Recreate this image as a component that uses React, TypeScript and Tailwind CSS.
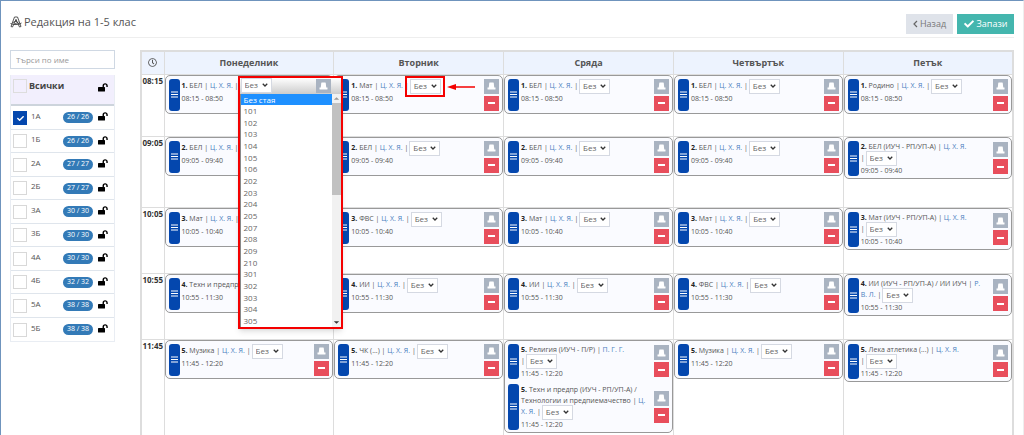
import { FaCheck, FaRegClock } from "react-icons/fa";

type Lesson = {
  no: number;
  title: string;
  // second line of a long title
  extraLine?: string;
  teacher: string;
  // part of the teacher name that goes to the next line
  teacherRest?: string;
  time: string;
  wrap?: boolean;
};

const classes = [
  { name: "1А", hours: "26 / 26", checked: true },
  { name: "1Б", hours: "26 / 26" },
  { name: "2А", hours: "27 / 27" },
  { name: "2Б", hours: "27 / 27" },
  { name: "3А", hours: "30 / 30" },
  { name: "3Б", hours: "30 / 30" },
  { name: "4А", hours: "30 / 30" },
  { name: "4Б", hours: "32 / 32" },
  { name: "5А", hours: "38 / 38" },
  { name: "5Б", hours: "38 / 38" },
];

const days = ["Понеделник", "Вторник", "Сряда", "Четвъртък", "Петък"];

const rooms = [
  "Без стая", "101", "102", "103", "104", "105", "106", "202", "203", "204",
  "205", "207", "208", "209", "210", "301", "302", "303", "304", "305",
];

const simple = (no: number, title: string, time: string): Lesson => ({
  no,
  title,
  teacher: "Ц. Х. Я.",
  time,
});

const rows: { start: string; height: string; cells: Lesson[][] }[] = [
  {
    start: "08:15",
    height: "h-[62px]",
    cells: ["БЕЛ", "Мат", "БЕЛ", "БЕЛ", "Родино"].map((t) => [simple(1, t, "08:15 - 08:50")]),
  },
  {
    start: "09:05",
    height: "h-[71px]",
    cells: [
      ...["БЕЛ", "БЕЛ", "БЕЛ", "БЕЛ"].map((t) => [simple(2, t, "09:05 - 09:40")]),
      [{ ...simple(2, "БЕЛ (ИУЧ - РП/УП-А)", "09:05 - 09:40"), wrap: true }],
    ],
  },
  {
    start: "10:05",
    height: "h-[66px]",
    cells: [
      ...["Мат", "ФВС", "Мат", "Мат"].map((t) => [simple(3, t, "10:05 - 10:40")]),
      [{ ...simple(3, "Мат (ИУЧ - РП/УП-А)", "10:05 - 10:40"), wrap: true }],
    ],
  },
  {
    start: "10:55",
    height: "h-[66px]",
    cells: [
      ...["Техн и предпр", "ИИ", "ИИ", "ФВС"].map((t) => [simple(4, t, "10:55 - 11:30")]),
      [{ no: 4, title: "ИИ (ИУЧ - РП/УП-А) / ИИ ИУЧ", teacher: "Р.", teacherRest: "В. Л.", time: "10:55 - 11:30" }],
    ],
  },
  {
    start: "11:45",
    height: "h-[120px]",
    cells: [
      [simple(5, "Музика", "11:45 - 12:20")],
      [simple(5, "ЧК (...)", "11:45 - 12:20")],
      [
        { no: 5, title: "Религия (ИУЧ - П/Р)", teacher: "П. Г. Г.", time: "11:45 - 12:20", wrap: true },
        {
          no: 5,
          title: "Техн и предпр (ИУЧ - РП/УП-А) /",
          extraLine: "Технологии и предпиемачество",
          teacher: "Ц.",
          teacherRest: "Х. Я.",
          time: "11:45 - 12:20",
        },
      ],
      [simple(5, "Музика", "11:45 - 12:20")],
      [{ ...simple(5, "Лека атлетика (...)", "11:45 - 12:20"), wrap: true }],
    ],
  },
];

const UnlockIcon = () => (
  <svg viewBox="0 0 20 18" className="h-[9px] w-[10px] shrink-0" aria-hidden="true">
    <path d="M1 8h12q1 0 1 1v7q0 1-1 1H1q-1 0-1-1V9q0-1 1-1z" fill="#000" />
    <path d="M10.500 9V5.500a3.800 3.800 0 0 1 7.600 0V8" fill="none" stroke="#000" strokeWidth="2.800" />
  </svg>
);

const HatIcon = () => (
  <svg viewBox="0 0 18 16" className="h-2 w-[9px]" aria-hidden="true">
    <path d="M4.500 2q0-1 1-1h7q1 0 1 1l1 9h-11zM1 11h16v3q0 1-1 1H2q-1 0-1-1z" fill="#fff" />
  </svg>
);

const CompassIcon = () => (
  <svg viewBox="0 0 24 24" className="size-3" fill="none" stroke="#444" strokeWidth="1.800" aria-hidden="true">
    <path d="M9 2h6l7 19-3 1L12 7 5 22l-3-1zM12 7v4M1 15c6 3 16 3 22-1M6 13l6-3 7 7M8 17l9-5" />
  </svg>
);

const RoomSelect = ({ label }: { label: string }) => (
  <span className="relative -my-px ml-px inline-flex h-[15px] w-[31px] align-middle">
    <select
      aria-label={label}
      className="size-full appearance-none rounded-none border border-[#d5d9e2] bg-white pr-3 pl-[3px] text-[8px] leading-3 text-[#666]"
    >
      {rooms.map((room) => (
        <option key={room}>{room}</option>
      ))}
    </select>
    <svg viewBox="0 0 12 8" className="pointer-events-none absolute top-[5px] right-1 h-1 w-[6px]" aria-hidden="true">
      <path d="M1.500 1.500 6 6l4.500-4.500" fill="none" stroke="#333" strokeWidth="2.600" />
    </svg>
  </span>
);

const RoomList = () => (
  <div className="absolute top-0 left-[72px] z-20 w-[105px] border-2 border-[#f40000] bg-white shadow-md">
    <div className="flex h-4 items-start justify-between bg-linear-to-b from-white to-[#ccc] py-px">
      <RoomSelect label="Стая" />
      <span className="mr-[10px] flex h-[14px] w-[15px] items-center justify-center bg-[#a9b3c1]">
        <HatIcon />
      </span>
    </div>
    <div className="flex border-l border-[#888]">
      <ul
        role="listbox"
        aria-label="Стаи"
        className="grid h-[233px] flex-1 auto-rows-fr text-[8px] leading-[11px] text-[#666]"
      >
        {rooms.map((room, i) => (
          <li
            key={room}
            role="option"
            aria-selected={i === 0}
            className={i === 0 ? "bg-[#1e90ff] pl-[3px] text-white" : "pl-[3px]"}
          >
            {room}
          </li>
        ))}
      </ul>
      <div className="flex w-[9px] flex-col items-center bg-[#f1f1f1]">
        <svg viewBox="0 0 10 10" className="size-[9px]" aria-hidden="true">
          <path d="M2 6.500 5 3.500l3 3z" fill="#999" />
        </svg>
        <div className="h-[92px] w-full bg-[#c1c1c1]" />
        <svg viewBox="0 0 10 10" className="mt-auto size-[9px]" aria-hidden="true">
          <path d="M2 3.500h6l-3 3z" fill="#333" />
        </svg>
      </div>
    </div>
  </div>
);

const LessonCard = ({ lesson, marked }: { lesson: Lesson; marked?: boolean }) => {
  const multiline = lesson.wrap || lesson.teacherRest;
  const select = <RoomSelect label={`Стая за ${lesson.title}`} />;
  return (
    <div className="flex gap-[2px] px-[3px] pt-[3px] pb-[2px]">
      <button
        aria-label="Премести"
        className="flex w-[11px] shrink-0 items-center justify-center rounded-[3px] bg-[#0447ae]"
      >
        <svg viewBox="0 0 7 7" className="size-[7px]" aria-hidden="true">
          <path d="M0 1h7M0 3.500h7M0 6h7" stroke="#fff" />
        </svg>
      </button>
      <div
        className={`min-w-0 flex-1 text-[7px] leading-[11px] whitespace-nowrap ${multiline ? "" : "pt-px"}`}
      >
        <div>
          <b className="text-[#222]">{lesson.no}.</b> {lesson.title}
          {lesson.extraLine && (
            <>
              <br />
              {lesson.extraLine}
            </>
          )}{" "}
          |{" "}
          <a href="#" className="text-[#4a7fc0]">
            {lesson.teacher}
            {lesson.teacherRest && (
              <>
                <br />
                {lesson.teacherRest}
              </>
            )}
          </a>
          {lesson.wrap ? <br /> : " "}
          {marked ? (
            <span className="relative inline-block">
              |{select}
              <span className="pointer-events-none absolute -inset-y-1 -right-1 left-0 border-2 border-[#f40000]" />
              <svg viewBox="0 0 28 8" className="absolute top-[3px] left-full ml-[6px] h-2 w-7" aria-hidden="true">
                <path d="M6 4h22" stroke="#f40000" strokeWidth="1.500" />
                <path d="M0 4 9 1v6z" fill="#f40000" />
              </svg>
            </span>
          ) : (
            <>|{select}</>
          )}
        </div>
        <div>{lesson.time}</div>
      </div>
      <div className="flex shrink-0 flex-col justify-center gap-[2px]">
        <button aria-label="Замести" className="flex size-[15px] items-center justify-center bg-[#a9b3c1]">
          <HatIcon />
        </button>
        <button aria-label="Премахни" className="flex size-[15px] items-center justify-center bg-[#e84e5c]">
          <span className="h-[2px] w-[7px] bg-white" />
        </button>
      </div>
    </div>
  );
};

const Sidebar = () => (
  <aside className="w-[105px] shrink-0">
    <input
      type="text"
      aria-label="Търси по име"
      placeholder="Търси по име"
      className="block h-[19px] w-full border border-[#cfd8e3] px-[5px] text-[8px] placeholder:text-[#999]"
    />
    <div className="mt-[6px] border-x border-b border-[#e9edf3]">
      <div className="flex h-[31px] items-start border-b-2 border-[#cdd4dc] bg-[#f2effd] px-[2px] pt-1">
        <input type="checkbox" id="all" className="size-[14px] appearance-none border border-[#ddd]" />
        <label htmlFor="all" className="ml-[2px] text-[9px] leading-[14px] font-bold text-[#444]">
          Всички
        </label>
        <span className="mt-1 mr-1 ml-auto">
          <UnlockIcon />
        </span>
      </div>
      {classes.map((c, i) => (
        <div
          key={c.name}
          className="flex h-[23px] items-center border-b border-[#dfe5ec] px-[2px] last:border-b-0 even:h-6"
        >
          <span className="relative flex">
            <input
              type="checkbox"
              id={`class-${i}`}
              defaultChecked={c.checked}
              className="size-[14px] appearance-none border border-[#d8d8d8] bg-white checked:border-[#0447ae] checked:bg-[#0447ae]"
            />
            {c.checked && <FaCheck className="pointer-events-none absolute top-1 left-1 size-[7px] text-white" />}
          </span>
          <label htmlFor={`class-${i}`} className="mb-1 ml-1 flex-1 text-[8px] leading-3">
            {c.name}
          </label>
          <span className="mr-[5px] flex h-[11px] w-[30px] items-center justify-center rounded-full bg-[#337ab7] text-[7px] text-white">
            {c.hours}
          </span>
          <span className="mr-1 mb-[2px]">
            <UnlockIcon />
          </span>
        </div>
      ))}
    </div>
  </aside>
);

const App = () => {
  return (
    <div className="relative h-screen overflow-hidden border-t border-r border-l border-t-[#6f94bd] border-r-[#eee] border-l-[#6f94bd] bg-white px-[9px] font-['Open_Sans','Noto_Sans',sans-serif] text-[#555]">
      <header className="flex h-[37px] items-end justify-between border-b border-[#eee] pb-[3px]">
        <h1 className="mb-1 flex items-center gap-[2px] text-[11px] leading-4">
          <CompassIcon />
          Редакция на 1-5 клас
        </h1>
        <div className="flex gap-1 text-[9px]">
          <button className="flex h-5 w-[47px] items-center justify-center gap-[2px] bg-[#dfe3ea] text-[#777]">
            <svg viewBox="0 0 5 8" className="h-2 w-[5px]" aria-hidden="true">
              <path d="M4 1 1 4l3 3" fill="none" stroke="#666" strokeWidth="1.200" />
            </svg>
            Назад
          </button>
          <button className="flex h-5 w-[57px] items-center justify-center gap-[3px] bg-[#44b6ae] text-white">
            <FaCheck className="size-[10px]" />
            Запази
          </button>
        </div>
      </header>

      <main className="mt-3 flex gap-[25px]">
        <Sidebar />
        <div className="min-w-0 flex-1">
          <table className="w-full table-fixed border-collapse border-2 border-[#ddd]">
            <thead>
              <tr className="h-[23px] bg-[#edf3fe]">
                <th className="w-[23px] border border-[#ddd] p-0">
                  <FaRegClock aria-label="Час" className="mx-auto size-[9px]" />
                </th>
                {days.map((day) => (
                  <th key={day} className="border border-[#ddd] p-0 text-[9px] leading-3 font-bold">
                    {day}
                  </th>
                ))}
              </tr>
            </thead>
            <tbody>
              {rows.map((row, r) => (
                <tr key={row.start} className={row.height}>
                  <th className="border border-[#ddd] p-0 text-center align-top text-[8px] leading-3 font-bold text-[#333]">
                    {row.start}
                  </th>
                  {row.cells.map((cell, d) => (
                    <td key={days[d]} className="border border-[#ddd] p-0 align-top">
                      <div className="relative rounded-[5px] border border-[#999] bg-[#fafbff]">
                        {cell.map((lesson) => (
                          <LessonCard key={lesson.title} lesson={lesson} marked={r === 0 && d === 1} />
                        ))}
                        {r === 0 && d === 0 && <RoomList />}
                      </div>
                    </td>
                  ))}
                </tr>
              ))}
            </tbody>
          </table>
        </div>
      </main>
      <span className="absolute bottom-[34px] -left-px h-6 w-px bg-[#f08080]" />
    </div>
  );
};

export default App;
